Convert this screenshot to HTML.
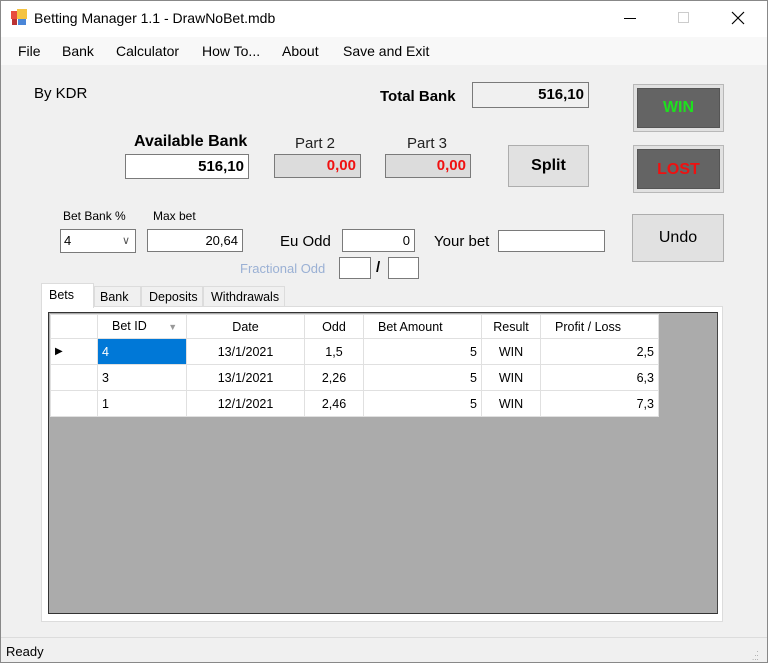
<!DOCTYPE html>
<html><head><meta charset="utf-8"><style>
*{box-sizing:border-box;margin:0;padding:0}
body{width:768px;height:663px;position:relative;overflow:hidden;background:#f0f0f0;font-family:"Liberation Sans",sans-serif;color:#000}
.a{position:absolute;white-space:nowrap}
.box{position:absolute;border:1px solid #7a7a7a;background:#fff;text-align:right;padding-right:4px;font-size:14px}
.btn{position:absolute;border:1px solid #adadad;background:#e1e1e1;text-align:center;font-size:16px}
.dk{position:absolute;border:1px solid #b8b8b8;background:#e1e1e1;padding:3px}
.dk div{width:100%;height:100%;background:#646464;border:1px solid #555;font-weight:bold;font-size:16px;text-align:center}
table{border-collapse:collapse;font-size:12.5px}
td{border:1px solid #e0e0e0;height:26px;background:#fff;padding:0 4px;line-height:14px}
tr.h td{height:24px}
</style></head><body>
<div class="a" style="left:0;top:0;width:768px;height:37px;background:#fff;border:1px solid #888;border-bottom:none"></div>
<div class="a" style="left:11px;top:11px;width:8px;height:8px;background:#e84c3d"></div>
<div class="a" style="left:17px;top:9px;width:10px;height:10px;background:#f5c342"></div>
<div class="a" style="left:18px;top:19px;width:8px;height:6px;background:#4a86d8"></div>
<div class="a" style="left:12px;top:19px;width:5px;height:6px;background:#b33"></div>
<div class="a" style="left:34px;top:10px;font-size:14px">Betting Manager 1.1 - DrawNoBet.mdb</div>
<div class="a" style="left:624px;top:18px;width:12px;height:1px;background:#000"></div>
<div class="a" style="left:678px;top:12px;width:11px;height:11px;border:1px solid #ccc"></div>
<svg class="a" style="left:731px;top:11px" width="14" height="14"><path d="M1 1L13 13M13 1L1 13" stroke="#000" stroke-width="1.2"/></svg>
<div class="a" style="left:0;top:37px;width:768px;height:28px;background:#f8f8f8;border-left:1px solid #888;border-right:1px solid #888"></div>
<div class="a" style="top:43px;left:18px;font-size:14px">File</div>
<div class="a" style="top:43px;left:62px;font-size:14px">Bank</div>
<div class="a" style="top:43px;left:116px;font-size:14px">Calculator</div>
<div class="a" style="top:43px;left:202px;font-size:14px">How To...</div>
<div class="a" style="top:43px;left:282px;font-size:14px">About</div>
<div class="a" style="top:43px;left:343px;font-size:14px">Save and Exit</div>
<div class="a" style="left:0;top:65px;width:1px;height:598px;background:#888"></div>
<div class="a" style="right:0;top:65px;width:1px;height:598px;background:#888"></div>

<div class="a" style="left:34px;top:85px;font-size:15px">By KDR</div>
<div class="a" style="left:380px;top:88px;font-size:15px;font-weight:bold">Total Bank</div>
<div class="box" style="left:472px;top:82px;width:117px;height:26px;background:#f0f0f0;font-weight:bold;font-size:15px;line-height:24px">516,10</div>
<div class="dk" style="left:633px;top:84px;width:91px;height:48px"><div style="color:#1ee01e;line-height:38px">WIN</div></div>
<div class="dk" style="left:633px;top:145px;width:91px;height:48px"><div style="color:#f01010;line-height:40px">LOST</div></div>

<div class="a" style="left:134px;top:133px;font-size:16px;font-weight:bold">Available Bank</div>
<div class="box" style="left:125px;top:154px;width:124px;height:25px;font-weight:bold;font-size:15px;line-height:23px">516,10</div>
<div class="a" style="left:295px;top:135px;font-size:15px;color:#222">Part 2</div>
<div class="box" style="left:274px;top:154px;width:87px;height:24px;background:#dcdcdc;color:#f01010;font-weight:bold;font-size:15px;line-height:22px">0,00</div>
<div class="a" style="left:407px;top:135px;font-size:15px;color:#222">Part 3</div>
<div class="box" style="left:385px;top:154px;width:86px;height:24px;background:#dcdcdc;color:#f01010;font-weight:bold;font-size:15px;line-height:22px">0,00</div>
<div class="btn" style="left:508px;top:145px;width:81px;height:42px;line-height:40px;font-weight:bold">Split</div>

<div class="a" style="left:63px;top:209px;font-size:12px">Bet Bank %</div>
<div class="box" style="left:60px;top:229px;width:76px;height:24px;text-align:left;padding-left:3px;line-height:22px;font-size:13px">4<span style="position:absolute;right:5px;top:0;color:#555;font-size:11px">&#8744;</span></div>
<div class="a" style="left:153px;top:209px;font-size:12px">Max bet</div>
<div class="box" style="left:147px;top:229px;width:96px;height:23px;line-height:21px;font-size:13px">20,64</div>
<div class="a" style="left:280px;top:233px;font-size:15px">Eu Odd</div>
<div class="box" style="left:342px;top:229px;width:73px;height:23px;line-height:21px;font-size:13px">0</div>
<div class="a" style="left:434px;top:233px;font-size:15px">Your bet</div>
<div class="box" style="left:498px;top:230px;width:107px;height:22px"></div>
<div class="btn" style="left:632px;top:214px;width:92px;height:48px;line-height:46px">Undo</div>
<div class="a" style="left:240px;top:261px;font-size:13px;color:#9ab0d4">Fractional Odd</div>
<div class="box" style="left:339px;top:257px;width:32px;height:22px"></div>
<div class="a" style="left:376px;top:259px;font-size:15px;font-weight:bold">/</div>
<div class="box" style="left:388px;top:257px;width:31px;height:22px"></div>

<div class="a" style="left:41px;top:306px;width:682px;height:316px;background:#fff;border:1px solid #dcdcdc"></div>
<div class="a" style="left:94px;top:286px;width:47px;height:21px;border:1px solid #dcdcdc;background:#f0f0f0;font-size:12.5px;padding:3px 0 0 5px">Bank</div>
<div class="a" style="left:141px;top:286px;width:62px;height:21px;border:1px solid #dcdcdc;background:#f0f0f0;font-size:12.5px;padding:3px 0 0 7px">Deposits</div>
<div class="a" style="left:203px;top:286px;width:82px;height:21px;border:1px solid #dcdcdc;background:#f0f0f0;font-size:12.5px;padding:3px 0 0 7px">Withdrawals</div>
<div class="a" style="left:41px;top:283px;width:53px;height:25px;border:1px solid #dcdcdc;border-bottom:none;background:#fff;font-size:12.5px;padding:4px 0 0 7px">Bets</div>

<div class="a" style="left:48px;top:312px;width:670px;height:302px;background:#ababab;border:1px solid #333;border-right-color:#444">
<table style="position:absolute;left:1px;top:1px">
<tr class="h"><td style="width:47px"></td><td style="width:89px;padding-left:14px">Bet ID <span style="color:#999;font-size:9px;margin-left:18px">▼</span></td><td style="width:118px;text-align:center">Date</td><td style="width:59px;text-align:center">Odd</td><td style="width:118px;padding-left:14px">Bet Amount</td><td style="width:59px;text-align:center">Result</td><td style="width:118px;padding-left:14px">Profit / Loss</td></tr>
<tr><td style="font-size:10px">▶</td><td style="background:#0078d7;color:#fff">4</td><td style="text-align:center">13/1/2021</td><td style="text-align:center">1,5</td><td style="text-align:right">5</td><td style="text-align:center">WIN</td><td style="text-align:right">2,5</td></tr>
<tr><td></td><td>3</td><td style="text-align:center">13/1/2021</td><td style="text-align:center">2,26</td><td style="text-align:right">5</td><td style="text-align:center">WIN</td><td style="text-align:right">6,3</td></tr>
<tr><td></td><td>1</td><td style="text-align:center">12/1/2021</td><td style="text-align:center">2,46</td><td style="text-align:right">5</td><td style="text-align:center">WIN</td><td style="text-align:right">7,3</td></tr>
</table></div>

<div class="a" style="left:1px;top:637px;width:766px;height:1px;background:#dcdcdc"></div>
<div class="a" style="left:6px;top:644px;font-size:13px">Ready</div>
<div class="a" style="left:752px;top:648px;font-size:8px;color:#999;line-height:4px">&nbsp;&nbsp;.<br>&nbsp;..<br>...</div>
<div class="a" style="left:0;top:662px;width:768px;height:1px;background:#888"></div>
</body></html>
